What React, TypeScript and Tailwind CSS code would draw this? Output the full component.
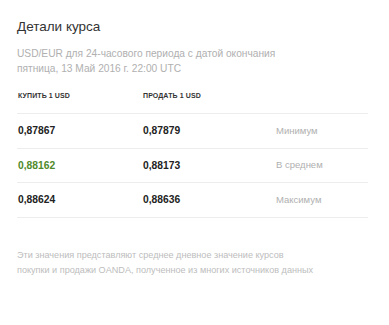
const rows = [
  { buy: "0,87867", sell: "0,87879", label: "Минимум", highlight: false },
  { buy: "0,88162", sell: "0,88173", label: "В среднем", highlight: true },
  { buy: "0,88624", sell: "0,88636", label: "Максимум", highlight: false },
];

export default function App() {
  return (
    <div
      className="w-[389px] h-[325px] bg-white pl-[17px] pr-[21px] pt-[18px]"
      style={{ fontFamily: '"Liberation Sans", Arial, sans-serif' }}
    >
      <h2 className="text-[13.5px] leading-[17px] text-[#333]">Детали курса</h2>

      <p className="mt-[11px] text-[10.2px] leading-[15px] text-[#b0b0b0]">
        USD/EUR для 24-часового периода с датой окончания
        <br />
        пятница, 13 Май 2016 г. 22:00 UTC
      </p>

      <div className="mt-[15px]">
        <div className="flex h-[22px] items-start pl-[1px] text-[7px] font-bold tracking-[0.1px] text-[#333]">
          <div className="w-[125px]">КУПИТЬ 1 USD</div>
          <div>ПРОДАТЬ 1 USD</div>
        </div>
        <div className="border-t border-[#ededed]">
          {rows.map((r) => (
            <div
              key={r.label}
              className="flex h-[34.5px] items-center border-b border-[#ededed] pl-[1px]"
            >
              <div
                className={`w-[125px] text-[10.3px] font-bold ${
                  r.highlight ? "text-[#4f8a2b]" : "text-[#222]"
                }`}
              >
                {r.buy}
              </div>
              <div className="w-[133px] text-[10.3px] font-bold text-[#222]">{r.sell}</div>
              <div className="text-[9.5px] text-[#b0b0b0]">{r.label}</div>
            </div>
          ))}
        </div>
      </div>

      <p className="mt-[30px] text-[9.1px] leading-[15px] text-[#bdbdbd]">
        Эти значения представляют среднее дневное значение курсов
        <br />
        покупки и продажи OANDA, полученное из многих источников данных
      </p>
    </div>
  );
}
